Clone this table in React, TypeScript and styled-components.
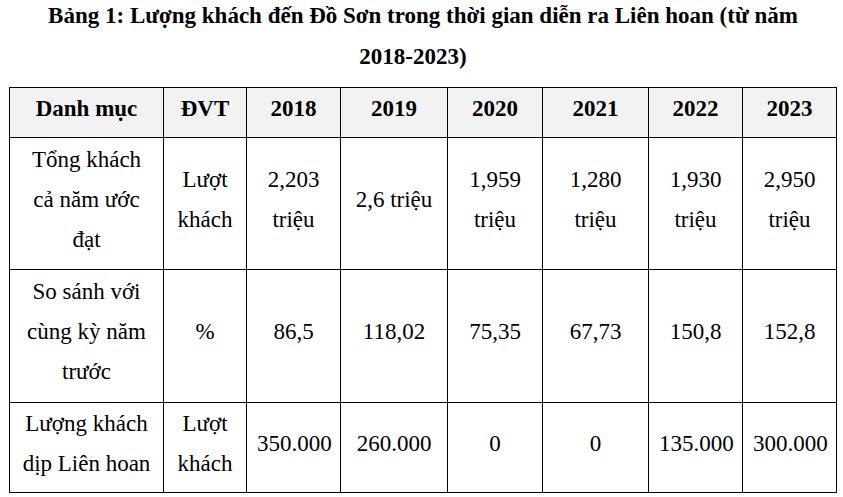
import React from 'react';
import styled, { createGlobalStyle } from 'styled-components';

interface Row {
  id: number
  label: string
  unit: string
  values: string[]
  height: number
}

const years = ['2018', '2019', '2020', '2021', '2022', '2023'];
const colWidths = [154, 83, 94, 107, 95, 106, 94, 94];

const rows: Row[] = [
  { id: 1, label: 'Tổng khách cả năm ước đạt', unit: 'Lượt khách', height: 132,
    values: ['2,203 triệu', '2,6 triệu', '1,959 triệu', '1,280 triệu', '1,930 triệu', '2,950 triệu'] },
  { id: 2, label: 'So sánh với cùng kỳ năm trước', unit: '%', height: 133,
    values: ['86,5', '118,02', '75,35', '67,73', '150,8', '152,8'] },
  { id: 3, label: 'Lượng khách dịp Liên hoan', unit: 'Lượt khách', height: 90,
    values: ['350.000', '260.000', '0', '0', '135.000', '300.000'] },
];

const App: React.FC = () => {
  return (
    <Page>
      <GlobalStyle />
      <Caption>
        <CaptionLine>Bảng 1: Lượng khách đến Đồ Sơn trong thời gian diễn ra Liên hoan (từ năm</CaptionLine>
        <CaptionLine $shift={20}>2018-2023)</CaptionLine>
      </Caption>
      <Table>
        <colgroup>
          {colWidths.map((w, i) => (
            <col key={i} style={{ width: w }} />
          ))}
        </colgroup>
        <thead>
          <TableRow $height={50}>
            <HeadCell>Danh mục</HeadCell>
            <HeadCell>ĐVT</HeadCell>
            {years.map((y) => (
              <HeadCell key={y}>{y}</HeadCell>
            ))}
          </TableRow>
        </thead>
        <tbody>
          {rows.map((row) => (
            <TableRow key={row.id} $height={row.height}>
              <Cell>{row.label}</Cell>
              <Cell>{row.unit}</Cell>
              {row.values.map((v, i) => (
                <Cell key={i}>{v}</Cell>
              ))}
            </TableRow>
          ))}
        </tbody>
      </Table>
    </Page>
  );
};

const serif = `"Liberation Serif", "Times New Roman", Times, serif`;

const GlobalStyle = createGlobalStyle`
  body {
    margin: 0;
    background: #fff;
    font-family: ${serif};
    color: #000;
  }
`;

const Page = styled.div`
  width: 828px;
  margin-left: 9px;
`;

const Caption = styled.div`
  margin-top: -5px;
  margin-bottom: 10px;
  font-family: ${serif};
  font-size: 23px;
  font-weight: bold;
  line-height: 41px;
  text-align: center;
`;

const CaptionLine = styled.div<{ $shift?: number }>`
  white-space: nowrap;
  padding-right: ${(p) => p.$shift || 0}px;
`;

const Table = styled.table`
  width: 828px;
  table-layout: fixed;
  border-collapse: collapse;
  font-family: ${serif};
  font-size: 23px;
  line-height: 40px;
`;

const TableRow = styled.tr<{ $height: number }>`
  height: ${(p) => p.$height}px;
`;

const HeadCell = styled.th`
  padding: 0 10px 8px;
  border: 1px solid #000;
  background: #f2f2f2;
  font-family: ${serif};
  font-weight: bold;
  text-align: center;
  vertical-align: middle;
`;

const Cell = styled.td`
  padding: 0 10px 8px;
  border: 1px solid #000;
  font-family: ${serif};
  text-align: center;
  vertical-align: middle;
`;

export default App;
